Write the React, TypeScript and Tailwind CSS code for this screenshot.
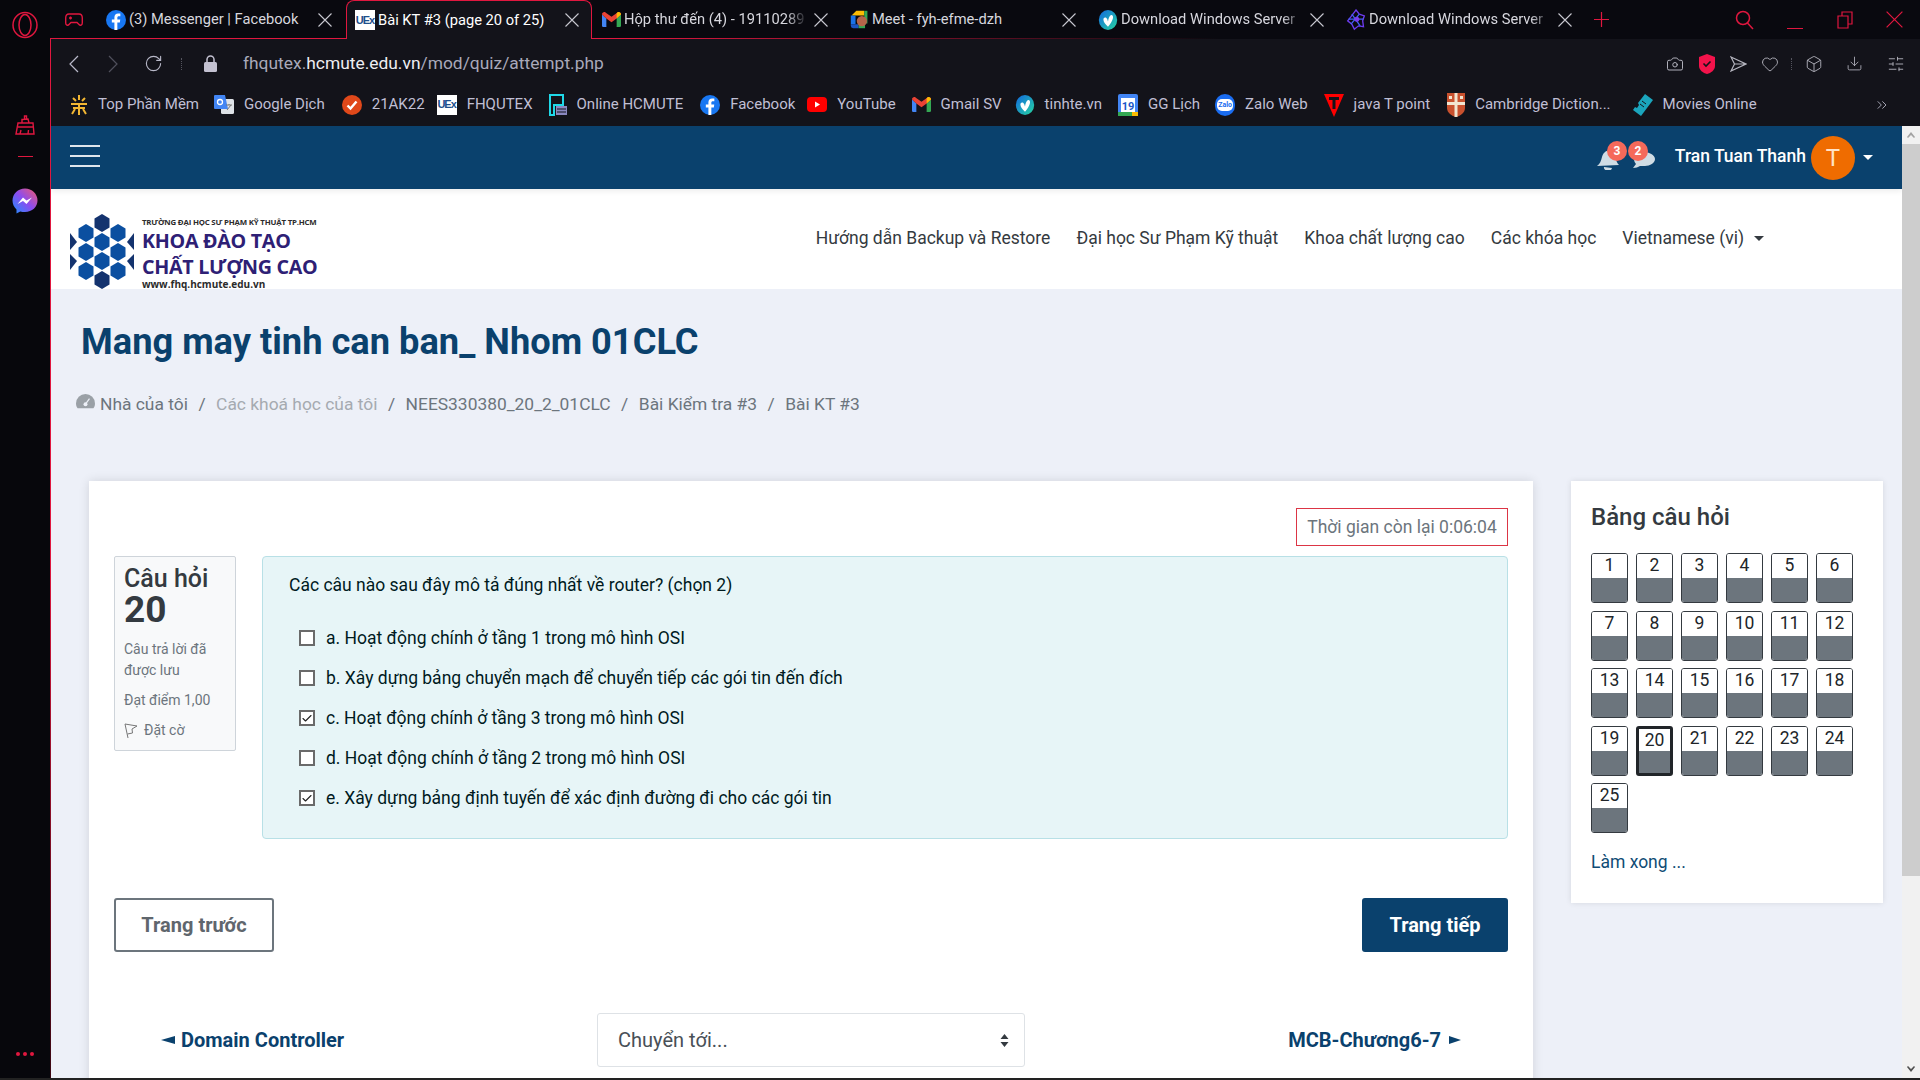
import React from "react";
import { RotateCw, Camera, Heart, Box, Download, SlidersHorizontal, ChevronsRight, Check } from "lucide-react";

const Cross = ({ s = 14, c = "#c8c8d0", w = 1.1, cls = "" }: { s?: number; c?: string; w?: number; cls?: string }) => (
  <svg width={s} height={s} viewBox="0 0 14 14" className={`shrink-0 ${cls}`} fill="none" stroke={c} strokeWidth={w}>
    <path d="M.5.5l13 13M13.500.5l-13 13" />
  </svg>
);
const Fb = ({ s = 18 }: { s?: number }) => (
  <svg width={s} height={s} viewBox="0 0 24 24" className="shrink-0">
    <circle cx="12" cy="12" r="12" fill="#1877f2" />
    <path d="M13.6 24v-9h3l.5-3.6h-3.500V9.300c0-1 .4-1.800 1.900-1.800h1.700V4.300c-.5-.1-1.500-.2-2.700-.2-2.700 0-4.400 1.600-4.400 4.600v2.700H7v3.600h3.100v9z" fill="#fff" />
  </svg>
);
const UEx = ({ s = 20 }: { s?: number }) => (
  <span className="shrink-0 bg-white text-[#1d4f8c] font-bold flex items-center justify-center overflow-hidden tracking-[-1px] font-['Liberation_Sans',sans-serif]" style={{ width: s, height: s, fontSize: s * 0.55 }}>UEx</span>
);
const Gmail = ({ s = 18 }: { s?: number }) => (
  <svg width={s} height={s * 0.8} viewBox="0 0 24 19" className="shrink-0">
    <path d="M0 3v14a2 2 0 0 0 2 2h3.500V8z" fill="#4285f4" />
    <path d="M24 3v14a2 2 0 0 1-2 2h-3.500V8z" fill="#34a853" />
    <path d="M0 3l5.500 5L12 13l6.500-5L24 3c0-2.500-2.800-3.800-4.800-2.300L12 6 4.800.7C2.800-.8 0 .5 0 3z" fill="#ea4335" />
    <path d="M18.500 8L24 3c0-2.500-2.800-3.800-4.800-2.300L18.500 1.200z" fill="#fbbc04" />
  </svg>
);
const Meet = () => (
  <svg width="19" height="19" viewBox="0 0 24 24" className="shrink-0">
    <path d="M8 1h10v6H2z" fill="#fbbc04" />
    <path d="M1 7h6v11H1z" fill="#1a73e8" />
    <path d="M1 18h10v5H4a3 3 0 0 1-3-3z" fill="#1a56c4" />
    <path d="M11 18h8v5h-8z" fill="#34a853" />
    <path d="M18 1h4v16h-4z" fill="#34a853" />
    <circle cx="15" cy="14" r="6.500" fill="#b5654a" />
  </svg>
);
const Tinhte = ({ s = 20, id }: { s?: number; id: string }) => (
  <svg width={s} height={s} viewBox="0 0 24 24" className="shrink-0">
    <defs>
      <linearGradient id={id} x1="0" y1="0" x2="1" y2="1">
        <stop offset="0" stopColor="#1167e0" />
        <stop offset="1" stopColor="#27d6a0" />
      </linearGradient>
    </defs>
    <ellipse cx="12" cy="12" rx="11" ry="12" fill={`url(#${id})`} />
    <path d="M12 20c-3.500-3-5.500-6-5.500-8.500 0-2.300 1.800-3.200 3.200-2.200 1.300 1 1.800 2.700 2.300 4.500.5-3 1.500-6.500 3.200-7.500 1.800-.9 3.200 1 2.800 3.200-.6 3.300-2.800 7-6 10.500z" fill="#fff" />
  </svg>
);
const Star = () => (
  <svg width="20" height="22" viewBox="0 0 24 26" className="shrink-0" fill="none" stroke="#6d3bf0" strokeWidth="1.600">
    <path d="M12 1l4 5 6 2-2 6 1 7-6-1-5 4-3-6-5-4 4-5z" />
    <path d="M7 6l10 14M16 6L6 18M3 12h18" stroke="#3f62f5" />
    <circle cx="13" cy="12" r="3" fill="#7c3aed" stroke="none" />
  </svg>
);
const TopPM = () => (
  <svg width="18" height="22" viewBox="0 0 18 22" className="shrink-0" fill="none" stroke="#f2b632" strokeWidth="2">
    <path d="M9 1v5M3 4l3 3M15 4l-3 3M1 10h16M3 14h12M9 10v11M5 15l-3 5M13 15l3 5" />
  </svg>
);
const GTranslate = () => (
  <svg width="20" height="20" viewBox="0 0 20 20" className="shrink-0">
    <rect x="7" y="4" width="13" height="15" rx="1.500" fill="#dfe3e8" />
    <path d="M1 0h10l3 14H1a1 1 0 0 1-1-1V1a1 1 0 0 1 1-1z" fill="#4285f4" />
    <circle cx="6" cy="7" r="2.500" fill="none" stroke="#fff" strokeWidth="1.300" />
    <path d="M12 10h6M15 9v1M13 15l4-5" stroke="#777" strokeWidth="1" />
  </svg>
);
const Ak = () => (
  <svg width="20" height="20" viewBox="0 0 20 20" className="shrink-0">
    <circle cx="10" cy="10" r="10" fill="#e0481a" />
    <path d="M5.500 10.500l3 3 6-7" fill="none" stroke="#fff" strokeWidth="2.400" />
  </svg>
);
const Online = () => (
  <svg width="18" height="22" viewBox="0 0 18 22" className="shrink-0">
    <path d="M1 1h13v10H5v10H1z" fill="none" stroke="#1fd8e8" strokeWidth="2" />
    <rect x="7" y="12" width="11" height="9" fill="#8a88c0" />
    <path d="M8 15h9M8 18h9" stroke="#13131a" strokeWidth="1" />
  </svg>
);
const Yt = () => (
  <svg width="20" height="15" viewBox="0 0 20 15" className="shrink-0">
    <rect width="20" height="15" rx="4" fill="#f00" />
    <path d="M8 4.500v6l5-3z" fill="#fff" />
  </svg>
);
const Cal = () => (
  <svg width="20" height="22" viewBox="0 0 20 22" className="shrink-0">
    <rect width="20" height="22" rx="2" fill="#4285f4" />
    <rect x="3" y="4" width="14" height="14" fill="#fff" />
    <rect y="18" width="20" height="4" fill="#34a853" />
    <rect x="14" y="18" width="6" height="4" fill="#fbbc04" />
    <text x="10" y="15.500" fontSize="11" fontWeight="700" textAnchor="middle" fill="#1a57c8" fontFamily="Roboto">19</text>
  </svg>
);
const Zalo = () => (
  <span className="shrink-0 w-[20px] h-[22px] rounded-full bg-[#1a6cf0] flex items-center justify-center">
    <span className="w-[16px] h-[12px] rounded-[5px] bg-white text-[#1a6cf0] text-[7px] font-bold leading-[12px] text-center">Zalo</span>
  </span>
);
const JavaT = () => (
  <svg width="20" height="24" viewBox="0 0 20 24" className="shrink-0">
    <path d="M0 1h20L10 24z" fill="#f00" />
    <path d="M5 4h10v3h-3.500v9h-3V7H5z" fill="#13131a" />
  </svg>
);
const Camb = () => (
  <svg width="18" height="24" viewBox="0 0 18 24" className="shrink-0">
    <path d="M0 0h18v15c0 5-5 8-9 9-4-1-9-4-9-9z" fill="#c9512e" />
    <path d="M7.500 0h3v24h-3zM0 9h18v3H0z" fill="#f2e5d0" />
    <rect x="2" y="3" width="3" height="3" fill="#f2e5d0" />
    <rect x="13" y="3" width="3" height="3" fill="#f2e5d0" />
  </svg>
);
const Ticket = () => (
  <svg width="20" height="22" viewBox="0 0 20 22" className="shrink-0">
    <path d="M12 0l8 6-12 16-8-6 2-3 2 1 2-3-1-2z" fill="#1ba5bd" />
    <path d="M9 7l4 3M7 10l4 3" stroke="#13131a" strokeWidth="1" />
  </svg>
);

const tabs: { icon: React.ReactNode; label: string; active?: boolean; fade?: boolean }[] = [
  { icon: <Fb s={20} />, label: "(3) Messenger | Facebook" },
  { icon: <UEx s={20} />, label: "Bài KT #3 (page 20 of 25)", active: true },
  { icon: <Gmail s={19} />, label: "Hộp thư đến (4) - 19110289", fade: true },
  { icon: <Meet />, label: "Meet - fyh-efme-dzh" },
  { icon: <Tinhte s={20} id="tt1" />, label: "Download Windows Server", fade: true },
  { icon: <Star />, label: "Download Windows Server", fade: true },
];

const bookmarks: { icon: React.ReactNode; label: string; mr: string }[] = [
  { icon: <TopPM />, label: "Top Phần Mềm", mr: "mr-[15px]" },
  { icon: <GTranslate />, label: "Google Dịch", mr: "mr-[17px]" },
  { icon: <Ak />, label: "21AK22", mr: "mr-[12px]" },
  { icon: <UEx s={20} />, label: "FHQUTEX", mr: "mr-[16px]" },
  { icon: <Online />, label: "Online HCMUTE", mr: "mr-[17px]" },
  { icon: <Fb s={20} />, label: "Facebook", mr: "mr-[12px]" },
  { icon: <Yt />, label: "YouTube", mr: "mr-[16px]" },
  { icon: <Gmail s={19} />, label: "Gmail SV", mr: "mr-[13px]" },
  { icon: <Tinhte s={20} id="tt2" />, label: "tinhte.vn", mr: "mr-[16px]" },
  { icon: <Cal />, label: "GG Lịch", mr: "mr-[15px]" },
  { icon: <Zalo />, label: "Zalo Web", mr: "mr-[16px]" },
  { icon: <JavaT />, label: "java T point", mr: "mr-[17px]" },
  { icon: <Camb />, label: "Cambridge Diction...", mr: "mr-[22px]" },
  { icon: <Ticket />, label: "Movies Online", mr: "mr-[15px]" },
];

const options: { t: string; c: boolean }[] = [
  { t: "a. Hoạt động chính ở tầng 1 trong mô hình OSI", c: false },
  { t: "b. Xây dựng bảng chuyển mạch để chuyển tiếp các gói tin đến đích", c: false },
  { t: "c. Hoạt động chính ở tầng 3 trong mô hình OSI", c: true },
  { t: "d. Hoạt động chính ở tầng 2 trong mô hình OSI", c: false },
  { t: "e. Xây dựng bảng định tuyến để xác định đường đi cho các gói tin", c: true },
];

const hexes: [number, number, string][] = [
  [32, 9, "#14336e"],
  [16, 19, "#0b4fa0"], [48, 19, "#0b4fa0"],
  [32, 28, "#0b4fa0"],
  [16, 38, "#0b4fa0"], [48, 38, "#0b4fa0"],
  [32, 47, "#0b4fa0"],
  [16, 57, "#0b4fa0"], [48, 57, "#0b4fa0"],
  [32, 66, "#14336e"],
];
const Logo = () => (
  <svg width="64" height="75" viewBox="0 0 64 75" className="shrink-0">
    {hexes.map(([x, y, c], i) => (
      <polygon key={i} points={`${x - 7.5},${y - 4.5} ${x},${y - 9} ${x + 7.5},${y - 4.5} ${x + 7.5},${y + 4.5} ${x},${y + 9} ${x - 7.5},${y + 4.5}`} fill={c} />
    ))}
    <polygon points="0,19 7,28 0,36" fill="#14336e" />
    <polygon points="64,19 57,28 64,36" fill="#14336e" />
    <polygon points="0,40 7,47 0,56" fill="#14336e" />
    <polygon points="64,40 57,47 64,56" fill="#14336e" />
  </svg>
);

const Badge = ({ n }: { n: string }) => (
  <span className="w-[20px] h-[20px] rounded-full bg-[#f5695a] text-white text-[12px] font-bold flex items-center justify-center">{n}</span>
);

export default function App() {
  return (
    <div className="w-screen h-screen overflow-hidden flex flex-col bg-black font-['Roboto',sans-serif]">
      <div className="flex-1 min-h-0 flex">
        {/* Opera sidebar */}
        <div className="w-[50px] shrink-0 bg-[#07070c] flex flex-col items-center">
          <svg width="26" height="28" viewBox="0 0 26 28" className="mt-[11px]" fill="none" stroke="#e0173f" strokeWidth="1.500">
            <ellipse cx="13" cy="14" rx="12" ry="12.500" />
            <ellipse cx="13" cy="14" rx="6" ry="10.500" />
          </svg>
          <svg width="20" height="22" viewBox="0 0 20 22" className="mt-[75px]" fill="none" stroke="#e0173f" strokeWidth="1.400">
            <path d="M3 9h15l1 11H1zM3 13h15.500M7 9V5.500L13 5l1 4M9.500 5V2h2v3M5 20l1-4M13 20l.5-4" />
          </svg>
          <div className="mt-[20px] w-[15px] h-[1px] bg-[#e0173f]" />
          <svg width="26" height="27" viewBox="0 0 26 27" className="mt-[31px]">
            <defs>
              <linearGradient id="ms" x1="0" y1="1" x2="1" y2="0">
                <stop offset="0" stopColor="#1e90ff" />
                <stop offset="0.5" stopColor="#8a4cf0" />
                <stop offset="1" stopColor="#f25a70" />
              </linearGradient>
            </defs>
            <path d="M13 .5C6 .5.500 5.600.500 12.500c0 3.600 1.500 6.700 4 8.900V25.500l3.800-2.100c1.500.4 3 .6 4.700.6 7 0 12.500-5 12.500-11.500S20 .5 13 .5z" fill="url(#ms)" />
            <path d="M5.500 16l5.500-6.500 3.500 3 5.500-3-5.500 6.500-3.500-3z" fill="#fff" />
          </svg>
          <div className="mt-auto mb-[22px] flex gap-[3px]">
            <span className="w-[4px] h-[4px] rounded-full bg-[#e0173f]" />
            <span className="w-[4px] h-[4px] rounded-full bg-[#e0173f]" />
            <span className="w-[4px] h-[4px] rounded-full bg-[#e0173f]" />
          </div>
        </div>

        <div className="flex-1 min-w-0 flex flex-col">
          {/* Tab strip */}
          <div className="h-[39px] shrink-0 bg-[#09090f] flex items-stretch relative">
            <div className="absolute left-0 right-[700px] bottom-0 h-[1px] bg-gradient-to-r from-[#e0173f] via-[#e0173f] to-transparent" />
            <div className="w-[48px] shrink-0 flex items-center pl-[15px]">
              <svg width="18" height="14" viewBox="0 0 18 14" fill="none" stroke="#e0173f" strokeWidth="1.400">
                <path d="M4 1h10c2 0 3.300 1.500 3.300 4v5c0 2-2 3-3.300 1.500L12 9.500H6l-2 2C2.700 13 .7 12 .7 10V5C.7 2.500 2 1 4 1z" />
                <path d="M4 5h3M5.500 3.500v3" />
              </svg>
            </div>
            {tabs.map((t, i) => (
              <div key={i} className={`relative w-[246px] mr-[2px] shrink-0 flex items-center pl-[8px] pr-[12px] ${t.active ? "bg-[#13131a] border border-b-0 border-[#e0173f] rounded-t-[8px]" : ""}`}>
                {t.icon}
                <span className={`ml-[3px] flex-1 min-w-0 overflow-hidden whitespace-nowrap text-[14.700px] ${t.active ? "text-white" : "text-[#d7d7de]"} ${t.fade ? "[mask-image:linear-gradient(to_right,black_88%,transparent)]" : ""}`}>{t.label}</span>
                <Cross s={14} cls="ml-[6px]" />
              </div>
            ))}
            <div className="ml-[8px] flex items-center">
              <svg width="15" height="15" viewBox="0 0 15 15" stroke="#e0173f" strokeWidth="1.200"><path d="M7.500 0v15M0 7.500h15" /></svg>
            </div>
            <div className="ml-auto flex items-center pr-[17px]">
              <svg width="19" height="20" viewBox="0 0 19 20" fill="none" stroke="#e0173f" strokeWidth="1.500"><circle cx="8" cy="8" r="6.500" /><path d="M12.500 13l5.500 6" /></svg>
              <span className="ml-[33px] w-[16px] h-[1px] mt-[18px] bg-[#e0173f]" />
              <svg width="16" height="18" viewBox="0 0 16 18" className="ml-[34px]" fill="none" stroke="#e0173f" strokeWidth="1.200"><path d="M1 5h10v12H1zM5 5V1h10v12h-4" /></svg>
              <Cross s={17} c="#e0173f" w={1} cls="ml-[33px]" />
            </div>
          </div>

          {/* Toolbar + page, red edge on left */}
          <div className="flex-1 min-h-0 flex">
            <div className="w-[1px] shrink-0 bg-gradient-to-b from-[#e0173f] via-[#e0173f] to-[#3a0612]" />
            <div className="flex-1 min-w-0 flex flex-col">
              <div className="h-[49px] shrink-0 bg-[#13131a] flex items-center text-[#b9b9c9]">
                <svg width="10" height="18" viewBox="0 0 10 18" fill="none" stroke="#b9b9c9" strokeWidth="1.200" className="ml-[18px]"><path d="M9 1L1 9l8 8" /></svg>
                <svg width="10" height="18" viewBox="0 0 10 18" fill="none" stroke="#50505c" strokeWidth="1.200" className="ml-[29px]"><path d="M1 1l8 8-8 8" /></svg>
                <RotateCw size={19} strokeWidth={1.400} className="ml-[26px]" />
                <span className="ml-[18px] w-[1px] h-[12px] border-l border-dotted border-[#55555f]" />
                <svg width="13" height="17" viewBox="0 0 13 17" className="ml-[22px]"><rect y="7" width="13" height="10" rx="1.500" fill="#c3c1d1" /><path d="M3 7V4.500a3.500 3.500 0 0 1 7 0V7" fill="none" stroke="#c3c1d1" strokeWidth="1.500" /></svg>
                <span className="ml-[26px] text-[17.400px] text-[#a9a9ba] whitespace-nowrap">fhqutex.<span className="text-[#eeeef2]">hcmute.edu.vn</span>/mod/quiz/attempt.php</span>
                <div className="ml-auto flex items-center pr-[15px] text-[#b5b5bf]">
                  <Camera size={18} strokeWidth={1.300} />
                  <svg width="16" height="20" viewBox="0 0 16 20" className="ml-[15px]"><path d="M8 0l8 3v9c0 4-4 7-8 8-4-1-8-4-8-8V3z" fill="#f3134b" /><path d="M4.500 9.500l2.500 2.500 4.500-4.500" fill="none" stroke="#13131a" strokeWidth="1.600" /></svg>
                  <svg width="17" height="16" viewBox="0 0 17 16" className="ml-[15px]" fill="none" stroke="#b5b5bf" strokeWidth="1.200"><path d="M1 1l15 7-15 7 3.500-7zM4.500 8H16" /></svg>
                  <Heart size={18} strokeWidth={1.200} className="ml-[14px]" />
                  <span className="ml-[12px] w-[1px] h-[12px] border-l border-dotted border-[#55555f]" />
                  <Box size={18} strokeWidth={1.200} className="ml-[13px]" />
                  <Download size={17} strokeWidth={1.200} className="ml-[23px]" />
                  <SlidersHorizontal size={18} strokeWidth={1.200} className="ml-[24px]" />
                </div>
              </div>
              <div className="h-[38px] shrink-0 bg-[#13131a] flex items-center pl-[19px] pr-[30px] pb-[5px] text-[#c0bfd4]">
                {bookmarks.map((b) => (
                  <div key={b.label} className={`flex items-center gap-[10px] ${b.mr} whitespace-nowrap text-[15px]`}>
                    {b.icon}
                    <span>{b.label}</span>
                  </div>
                ))}
                <ChevronsRight size={16} strokeWidth={1.300} className="ml-auto text-[#b9b9c9]" />
              </div>

              {/* Web page */}
              <div className="flex-1 min-h-0 flex">
                <div className="flex-1 min-w-0 bg-[#edf0f8] overflow-hidden flex flex-col">
                  <div className="h-[63px] shrink-0 bg-[#0a416d] flex items-center pl-[19px] pr-[29px] text-white relative z-10 shadow-[0_2px_6px_rgba(0,0,0,0.08)]">
                    <div className="flex flex-col gap-[8px] mb-[3px]">
                      <span className="block w-[30px] h-[2px] bg-[#dfe6ec]" />
                      <span className="block w-[30px] h-[2px] bg-[#dfe6ec]" />
                      <span className="block w-[30px] h-[2px] bg-[#dfe6ec]" />
                    </div>
                    <div className="ml-auto flex items-center">
                      <div className="relative w-[60px] h-[22px] mr-[18px] mt-[2px]">
                        <svg width="60" height="22" viewBox="0 0 60 22" fill="#d0dce4">
                          <path d="M0 18c3-2 4-5 5-9 1-4 4-7 8-6.500 4 .5 6 3.500 6 7 0 3 1 6 3 7.500z" />
                          <path d="M7 19a4 3 0 0 0 8 1z" />
                          <path d="M36 20l3-4c-1-1-2-3-2-5 0-4 5-7 10-7s11 3 11 7-5 7-10 7c-2 0-3 0-5 0-2 1-4 2-7 2z" />
                        </svg>
                        <span className="absolute left-[10px] -top-[7px]"><Badge n="3" /></span>
                        <span className="absolute left-[31px] -top-[7px]"><Badge n="2" /></span>
                      </div>
                      <span className="text-[17.500px] font-medium mb-[2px]">Tran Tuan Thanh</span>
                      <span className="ml-[5px] w-[44px] h-[44px] rounded-full bg-[#ef6c00] flex items-center justify-center text-[24px] text-[#ffe2c6]">T</span>
                      <span className="ml-[8px] w-0 h-0 border-x-[5px] border-x-transparent border-t-[5px] border-t-white" />
                    </div>
                  </div>
                  <div className="h-[100px] shrink-0 bg-white flex items-center pl-[19px] pr-[138px]">
                    <div className="self-end h-[75px] flex items-start">
                      <Logo />
                      <div className="ml-[8px] pt-[2px] flex flex-col text-[#2e2075] font-['Open_Sans',sans-serif] font-bold whitespace-nowrap">
                        <span className="text-[7.850px] leading-[12px] text-[#2b2b2b] tracking-[-0.2px]">TRƯỜNG ĐẠI HỌC SƯ PHẠM KỸ THUẬT TP.HCM</span>
                        <span className="text-[19.700px] leading-[26px] tracking-[-0.3px]">KHOA ĐÀO TẠO</span>
                        <span className="text-[19.700px] leading-[26px] tracking-[-0.3px]">CHẤT LƯỢNG CAO</span>
                        <span className="text-[10px] leading-[9px] text-[#2b2b2b]">www.fhq.hcmute.edu.vn</span>
                      </div>
                    </div>
                    <nav className="ml-auto flex items-center gap-[26px] text-[17.500px] text-[#343a40] whitespace-nowrap -mt-[2px]">
                      <span>Hướng dẫn Backup và Restore</span>
                      <span>Đại học Sư Phạm Kỹ thuật</span>
                      <span>Khoa chất lượng cao</span>
                      <span>Các khóa học</span>
                      <span className="flex items-center gap-[10px]">Vietnamese (vi)<span className="w-0 h-0 border-x-[5px] border-x-transparent border-t-[5px] border-t-[#343a40]" /></span>
                    </nav>
                  </div>

                  <div className="flex-1 min-h-0 px-[38px] relative">
                    <h1 className="pt-[32px] -ml-[8px] text-[36.250px] leading-[42px] font-bold text-[#0a416d] whitespace-nowrap">Mang may tinh can ban_ Nhom 01CLC</h1>
                    <div className="mt-[29px] -ml-[13px] h-[24px] flex items-center text-[17.400px] text-[#6c757d] whitespace-nowrap">
                      <svg width="19" height="16" viewBox="0 0 24 20" className="mr-[5px] -mt-[6px]"><path d="M12 1a12 12 0 0 0-12 12c0 2.500.8 4.700 2 6h20c1.200-1.300 2-3.500 2-6A12 12 0 0 0 12 1z" fill="#9aa0a6" /><circle cx="12" cy="14" r="2.500" fill="#edf0f8" /><path d="M12 14l5-7" stroke="#edf0f8" strokeWidth="1.500" /></svg>
                      <span>Nhà của tôi</span><span className="mx-[10.500px]">/</span>
                      <span className="text-[#a5aab0]">Các khoá học của tôi</span><span className="mx-[10.500px]">/</span>
                      <span>NEES330380_20_2_01CLC</span><span className="mx-[10.500px]">/</span>
                      <span>Bài Kiểm tra #3</span><span className="mx-[10.500px]">/</span>
                      <span>Bài KT #3</span>
                    </div>

                    <div className="mt-[65px] flex items-start gap-[38px]">
                      {/* main card */}
                      <div className="w-[1444px] h-[700px] shrink-0 bg-white shadow-[0_0_10px_rgba(0,0,0,0.12)] px-[25px] pt-[27px]">
                        <div className="flex justify-end">
                          <div className="w-[212px] h-[38px] border border-[#dc3545] flex items-center justify-center text-[17.500px] text-[#6c757d] whitespace-nowrap">Thời gian còn lại 0:06:04</div>
                        </div>
                        <div className="mt-[10px] flex items-start gap-[26px]">
                          <div className="w-[122px] h-[195px] shrink-0 bg-[#f8f9fa] border border-[#ced4da] rounded-[2px] px-[9px] pt-[7px]">
                            <div className="text-[25px] leading-[29px] font-medium text-[#343a40]">Câu hỏi</div>
                            <div className="text-[37px] leading-[34px] font-bold text-[#343a40]">20</div>
                            <div className="mt-[12px] text-[14px] leading-[21px] text-[#6c757d]">Câu trả lời đã được lưu</div>
                            <div className="mt-[9px] text-[14px] leading-[21px] text-[#6c757d]">Đạt điểm 1,00</div>
                            <div className="mt-[9px] flex items-center text-[14px] leading-[21px] text-[#6c757d]">
                              <svg width="14" height="16" viewBox="0 0 14 16" fill="none" stroke="#777" strokeWidth="1"><path d="M1 1l3 14M1 1l12 2-5 3 .5 4-5 1" /></svg>
                              <span className="ml-[6px]">Đặt cờ</span>
                            </div>
                          </div>
                          <div className="flex-1 h-[283px] bg-[#e7f5f7] border border-[#b8e0e6] rounded-[4px] pl-[26px] pt-[15px] text-[#001a1e]">
                            <div className="text-[17.500px] leading-[26px]">Các câu nào sau đây mô tả đúng nhất về router? (chọn 2)</div>
                            <div className="mt-[20px] flex flex-col">
                              {options.map((o) => (
                                <div key={o.t} className="h-[40px] flex items-center pl-[10px] text-[17.500px] whitespace-nowrap">
                                  <span className="w-[16px] h-[16px] border-2 border-[#6a6a6a] bg-white flex items-center justify-center shrink-0">
                                    {o.c && <Check size={13} strokeWidth={2.200} className="text-[#222]" />}
                                  </span>
                                  <span className="ml-[11px]">{o.t}</span>
                                </div>
                              ))}
                            </div>
                          </div>
                        </div>
                        <div className="mt-[59px] flex justify-between">
                          <div className="w-[160px] h-[54px] border-2 border-[#6c757d] rounded-[3px] flex items-center justify-center text-[20px] font-bold text-[#5f666d] whitespace-nowrap">Trang trước</div>
                          <div className="w-[146px] h-[54px] bg-[#0a416d] rounded-[3px] flex items-center justify-center text-[20px] font-bold text-white whitespace-nowrap">Trang tiếp</div>
                        </div>
                        <div className="mt-[61px] flex items-center">
                          <div className="ml-[47px] w-[436px] text-[20px] font-bold text-[#0a416d] whitespace-nowrap flex items-center gap-[6px]">
                            <span className="w-0 h-0 border-y-[4.500px] border-y-transparent border-r-[14px] border-r-[#0a416d]" />
                            Domain Controller
                          </div>
                          <div className="w-[428px] h-[54px] border border-[#dee2e6] rounded-[3px] flex items-center justify-between pl-[20px] pr-[15px] text-[20px] text-[#495057]">
                            <span>Chuyển tới...</span>
                            <svg width="9" height="15" viewBox="0 0 9 15" fill="#343a40"><path d="M4.500 1L8.500 6H.5zM4.500 14L.5 9h8z" /></svg>
                          </div>
                          <div className="ml-auto mr-[47px] text-[20px] font-bold text-[#0a416d] whitespace-nowrap flex items-center gap-[8px]">
                            MCB-Chương6-7
                            <span className="w-0 h-0 border-y-[4.500px] border-y-transparent border-l-[12px] border-l-[#0a416d]" />
                          </div>
                        </div>
                      </div>
                      {/* side card */}
                      <div className="w-[312px] h-[422px] shrink-0 bg-white shadow-[0_0_6px_rgba(0,0,0,0.1)] px-[20px] pt-[21px]">
                        <div className="text-[24px] leading-[30px] font-medium text-[#343a40]">Bảng câu hỏi</div>
                        <div className="mt-[21px] grid grid-cols-[repeat(6,37px)] gap-x-[8px] gap-y-[7.500px]">
                          {Array.from({ length: 25 }, (_, i) => i + 1).map((n) => (
                            <div key={n} className={`h-[50px] rounded-[3px] overflow-hidden flex flex-col ${n === 20 ? "border-[3px] border-[#212529]" : "border border-[#343a40]"}`}>
                              <div className="flex-1 bg-white text-center text-[17.500px] leading-[22px] text-[#212529]">{n}</div>
                              <div className="h-[24px] bg-[#6c757d]" />
                            </div>
                          ))}
                        </div>
                        <div className="mt-[16px] text-[17.500px] leading-[26px] text-[#0f4c75]">Làm xong ...</div>
                      </div>
                    </div>
                  </div>
                </div>
                {/* scrollbar */}
                <div className="w-[18px] shrink-0 bg-[#f1f1f1] flex flex-col">
                  <div className="h-[18px] flex items-center justify-center"><svg width="8" height="6" viewBox="0 0 8 6" fill="#a3a3a3"><path d="M4 0l4 5-1 1-3-3-3 3-1-1z" /></svg></div>
                  <div className="h-[732px] bg-[#cdcdcd]" />
                  <div className="mt-auto h-[18px] flex items-center justify-center"><svg width="8" height="6" viewBox="0 0 8 6" fill="#505050"><path d="M4 6L0 1l1-1 3 3 3-3 1 1z" /></svg></div>
                </div>
              </div>
            </div>
          </div>
        </div>
      </div>
      <div className="h-[2px] shrink-0 bg-[#222]" />
    </div>
  );
}
